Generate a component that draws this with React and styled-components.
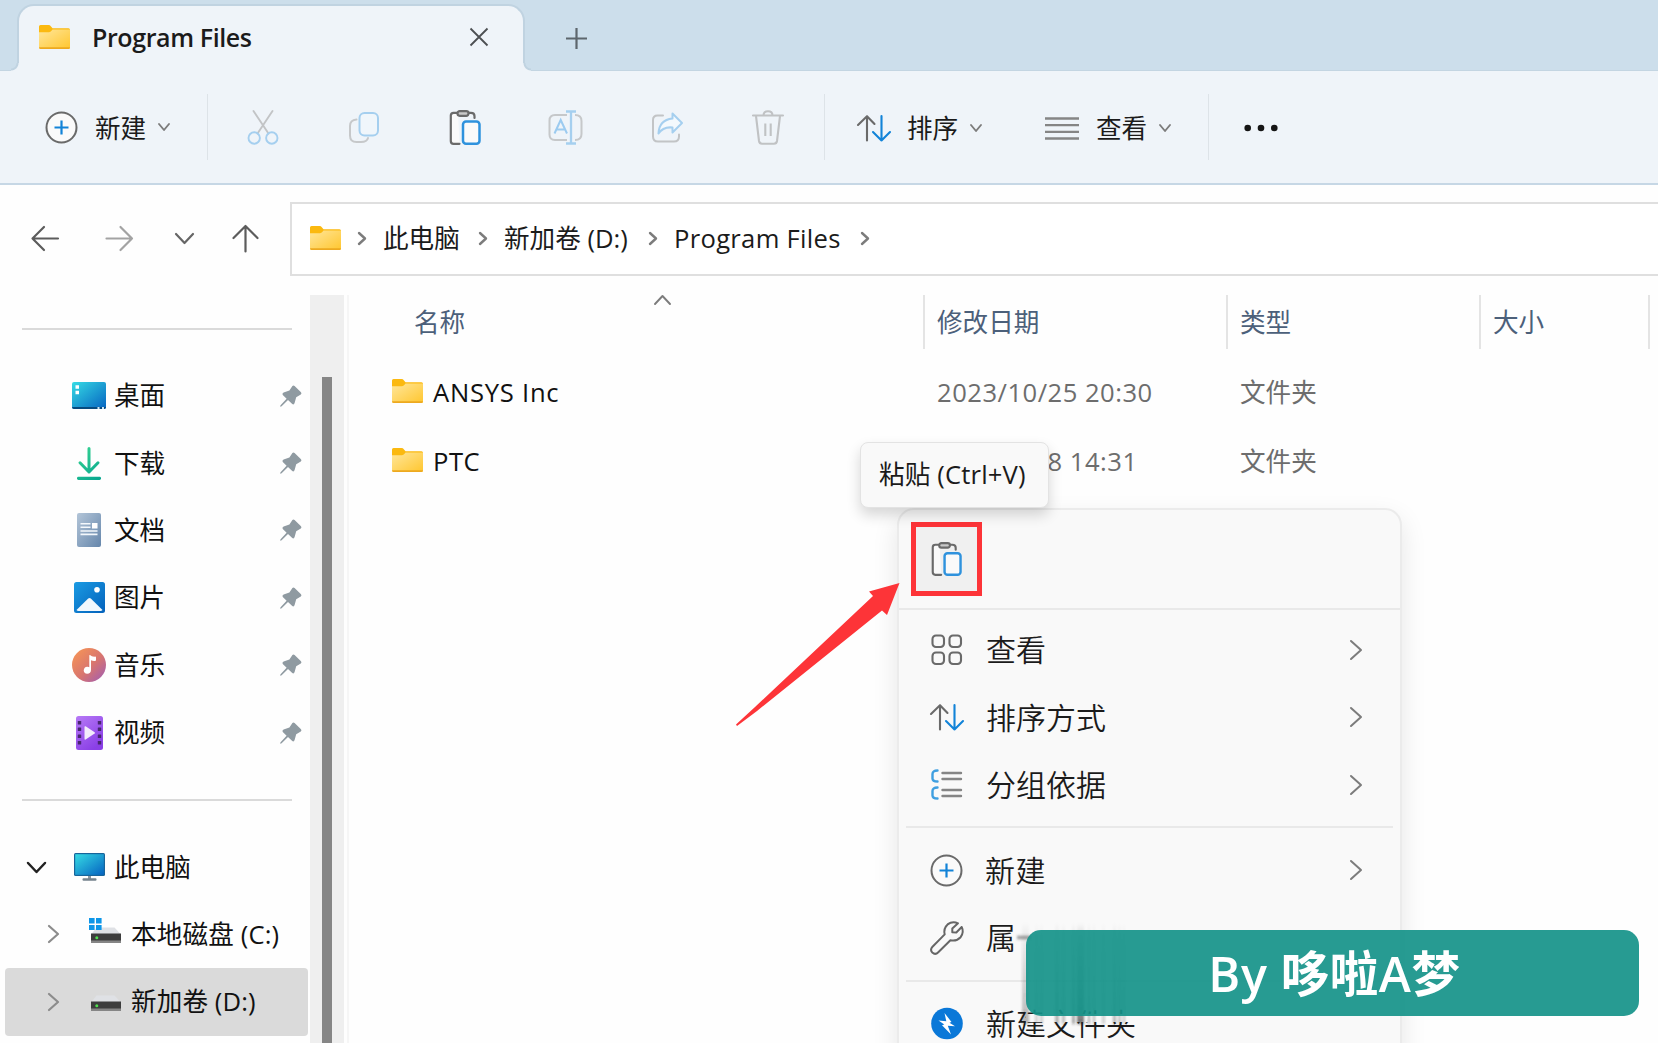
import React from 'react';
import styled, { createGlobalStyle } from 'styled-components';

const GlobalStyle = createGlobalStyle`
  * {
    box-sizing: border-box;
  }
  body {
    margin: 0;
    overflow: hidden;
    background: #fff;
    font-family: "Open Sans", "Noto Sans CJK SC", sans-serif;
    font-size: 25.6px;
    color: #1b1b1b;
  }
  svg {
    display: block;
    flex: none;
    overflow: visible;
  }
`;

const Window = styled.div`
  position: relative;
  width: 1658px;
  height: 1043px;
  overflow: hidden;
  display: flex;
  flex-direction: column;
  background: #fefefe;
`;

const Label = styled.span`
  white-space: nowrap;
  line-height: 34px;
  font-size: ${({ $size }) => $size || 25.6}px;
  letter-spacing: ${({ $track }) => $track || 0}px;
`;

/* ---------- tab strip ---------- */

const TabStrip = styled.div`
  display: flex;
  height: 71px;
  flex: none;
  padding: 4px 0 0 17px;
  background: #ccdeeb;
  border-bottom: 1px solid #c3d5e2;
`;

const Tab = styled.div`
  position: relative;
  display: flex;
  align-items: center;
  width: 508px;
  height: 67px;
  padding: 0 35px 3px 20px;
  border: 2px solid #c0d3e1;
  border-bottom: none;
  border-radius: 17px 17px 0 0;
  background: #eff4f9;

  /* flared feet of the tab */
  &::before,
  &::after {
    content: '';
    position: absolute;
    bottom: 0;
    width: 8px;
    height: 8px;
  }
  &::before {
    left: -8px;
    background: radial-gradient(circle at 0 0, #ccdeeb 5px, #c0d3e1 6px, #c0d3e1 7px, #eff4f9 8px);
  }
  &::after {
    right: -8px;
    background: radial-gradient(circle at 100% 0, #ccdeeb 5px, #c0d3e1 6px, #c0d3e1 7px, #eff4f9 8px);
  }
`;

const TabTitle = styled.span`
  flex: 1;
  margin-left: 22px;
  font-size: 25px;
  font-weight: 600;
  letter-spacing: -0.4px;
  line-height: 34px;
`;

const NewTab = styled.div`
  margin: 24px 0 0 41px;
`;

/* ---------- toolbar ---------- */

const Toolbar = styled.div`
  display: flex;
  align-items: center;
  flex: none;
  height: 114px;
  padding-left: 45px;
  background: #eff4f9;
  border-bottom: 2px solid #c6d7e5;
`;

const ToolButton = styled.div`
  display: flex;
  align-items: center;
  margin-left: ${({ $left }) => $left || 0}px;
  padding-top: ${({ $drop }) => $drop || 0}px;

  ${Label} {
    width: 51px;
    margin: 0 13px 0 ${({ $inset }) => $inset}px;
    padding-top: ${({ $drop }) => ($drop ? 2 : 4)}px;
  }
`;

const ToolSeparator = styled.div`
  width: 1px;
  height: 66px;
  margin-left: ${({ $left }) => $left}px;
  background: #dde3e8;
`;

const IconGroup = styled.div`
  display: flex;
  margin-left: 4px;
`;

const IconCell = styled.div`
  display: flex;
  align-items: center;
  justify-content: center;
  width: 101px;
  padding-top: 1px;
`;

/* ---------- address row ---------- */

const AddressRow = styled.div`
  display: flex;
  flex: none;
  height: 110px;
  padding: 17px 0 0 31px;
`;

const NavButtons = styled.div`
  display: flex;
  align-items: center;
  height: 73px;
  width: 259px;
`;

const NavIcon = styled.div`
  margin-right: ${({ $right }) => $right || 0}px;
`;

const AddressBar = styled.div`
  display: flex;
  align-items: center;
  flex: 1;
  height: 74px;
  padding: 0 0 2px 18px;
  border: 2px solid #dfdfdf;
  border-right: none;
  background: #fff;
`;

const Crumb = styled.div`
  display: flex;
  align-items: center;

  ${Label} {
    width: ${({ $width }) => $width}px;
    margin: 0 19px 0 18px;
    padding-top: 1px;
  }
`;

const CrumbStart = styled.div`
  margin-left: 18px;
`;

/* ---------- body ---------- */

const Body = styled.div`
  display: flex;
  flex: 1;
  min-height: 0;
`;

const Sidebar = styled.div`
  display: flex;
  flex-direction: column;
  flex: none;
  width: 310px;
`;

const Rule = styled.div`
  flex: none;
  height: 2px;
  margin: ${({ $top, $bottom }) => `${$top}px 18px ${$bottom}px 22px`};
  background: #dadada;
`;

const SideItem = styled.div`
  display: flex;
  align-items: center;
  flex: none;
  height: 67.4px;
  margin: 0 2px 0 5px;
  padding-left: ${({ $depth }) => ($depth ? 44 : 23)}px;
  border-radius: 4px;
  background: ${({ $active }) => ($active ? '#dadada' : 'transparent')};
  color: #111;

  ${Label} {
    flex: 1;
    padding-top: 1px;
  }
`;

const Expander = styled.div`
  flex: none;
  width: ${({ $depth }) => ($depth ? 39 : 43)}px;
`;

const SideIcon = styled.div`
  display: flex;
  flex: none;
  justify-content: center;
  width: 36px;
  margin-right: ${({ $depth }) => ($depth ? 7 : 7)}px;
`;

const Pin = styled.div`
  margin-right: 6px;
`;

const Scrollbar = styled.div`
  flex: none;
  width: 34px;
  padding: 82px 12px 0;
  background: #efefef;
`;

const Thumb = styled.div`
  height: 100%;
  background: #868686;
`;

const FilePane = styled.div`
  flex: 1;
  margin-left: 3px;
  border-left: 2px solid #f6f6f6;
`;

const HeaderRow = styled.div`
  display: grid;
  grid-template-columns: 576px 303px 253px 169px 1fr;
  height: 54px;
  margin-bottom: 10px;
  color: #4c607a;
`;

const HeaderCell = styled.div`
  display: flex;
  align-items: center;
  padding-left: ${({ $first }) => ($first ? 65 : 12)}px;
  border-right: 2px solid #e4e4e4;

  &:last-child {
    border: none;
  }

  ${Label} {
    padding-top: 2px;
  }
`;

const SortMark = styled.div`
  align-self: flex-start;
  margin: 1px 0 0 190px;
`;

const FileRow = styled.div`
  display: grid;
  grid-template-columns: 588px 303px 1fr;
  align-items: center;
  height: 69px;
  padding-bottom: 2px;
  color: #6d6d6d;
`;

const FileName = styled.div`
  display: flex;
  align-items: center;
  gap: 10px;
  padding-left: 43px;
  color: #111;

  svg {
    margin-bottom: 4px;
  }
`;

/* ---------- floating layers ---------- */

const ContextMenu = styled.div`
  position: absolute;
  left: 897px;
  top: 508px;
  width: 505px;
  height: 560px;
  border: 2px solid #ebebeb;
  border-radius: 17px;
  background: #f9f9f9;
  box-shadow: 0 10px 26px rgba(0, 0, 0, 0.1);
`;

const MenuActions = styled.div`
  height: 98px;
  padding: 12px 12px;
`;

const PasteButton = styled.div`
  display: flex;
  align-items: center;
  justify-content: center;
  width: 71px;
  height: 74px;
  border: 5px solid #fd3438;
  background: #f0f0f0;
`;

const MenuRule = styled.div`
  height: 2px;
  margin: 0 ${({ $inset }) => $inset || 0}px;
  background: #e9e9e9;
`;

const MenuGroup = styled.div`
  padding: ${({ $top }) => $top}px 39px ${({ $bottom }) => $bottom}px 31px;
`;

const MenuItem = styled.div`
  display: flex;
  align-items: center;
  height: 67.5px;

  ${Label} {
    flex: 1;
    margin-left: 22px;
    padding-top: 1px;
    font-weight: 350;
  }
`;

const Tooltip = styled.div`
  position: absolute;
  left: 860px;
  top: 442px;
  width: 189px;
  height: 66px;
  padding: 14px 0 0 18px;
  border: 1px solid #e3e3e3;
  border-radius: 8px;
  background: #f9f9f9;
  box-shadow: 0 7px 14px rgba(0, 0, 0, 0.16);
`;

const Arrow = styled.svg`
  position: absolute;
  left: 735px;
  top: 583px;
`;

const Smear = styled.svg`
  position: absolute;
  left: 1012px;
  top: 920px;
`;

const Banner = styled.div`
  position: absolute;
  left: 1026px;
  top: 930px;
  width: 613px;
  height: 86px;
  display: flex;
  align-items: center;
  justify-content: center;
  padding-left: 4px;
  border-radius: 15px;
  background: rgba(21, 146, 137, 0.92);
  color: #fff;
  font-size: 48.5px;
  font-weight: 600;
  letter-spacing: 0.6px;
  line-height: 60px;
  white-space: pre;
`;

/* ---------- icons ---------- */

const GREY = '#6a6a6a';
const BLUE = '#1283d8';

const FolderIcon = ({ width = 31, height = 24 }) => (
  <svg width={width} height={height} viewBox="0 0 31 24" preserveAspectRatio="none">
    <defs>
      <linearGradient id="folder" x1="0" y1="0" x2="1" y2="1">
        <stop offset="0" stopColor="#ffe69a" />
        <stop offset="1" stopColor="#ffc62e" />
      </linearGradient>
    </defs>
    <path d="M0 1.5Q0 0 1.5 0H9.5Q11 0 12 1.4L13.5 3.2H29.5Q31 3.2 31 4.7V10H0Z" fill="#fbb910" />
    <path d="M0 7.2H10Q11.5 7.2 12.5 5.8L13.5 4.6H31V22.5Q31 24 29.5 24H1.5Q0 24 0 22.5Z" fill="url(#folder)" />
    <path d="M0 22.2H31Q31 24 29.5 24H1.5Q0 24 0 22.2Z" fill="#eda91f" />
  </svg>
);

const Chevron = ({ w = 10, h = 6, dir = 'down', color = '#7c7c7c', stroke = 1.9 }) => {
  const points = {
    down: `0,0 ${w / 2},${h} ${w},0`,
    up: `0,${h} ${w / 2},0 ${w},${h}`,
    right: `0,0 ${w},${h / 2} 0,${h}`,
  };
  return (
    <svg width={w} height={h}>
      <polyline points={points[dir]} fill="none" stroke={color} strokeWidth={stroke} strokeLinecap="round" strokeLinejoin="round" />
    </svg>
  );
};

const PlusCircle = () => (
  <svg width="33" height="33" viewBox="0 0 33 33" fill="none">
    <circle cx="16.5" cy="16.5" r="15" fill="#fafafa" stroke={GREY} strokeWidth="2" />
    <path d="M16.5 9.5V23.5M9.5 16.5H23.5" stroke={BLUE} strokeWidth="2.2" />
  </svg>
);

const CutIcon = () => (
  <svg width="32" height="35" viewBox="0 0 32 35" fill="none" strokeWidth="1.9">
    <path d="M6.5 1L21.5 23.5M25.5 1L10.5 23.5" stroke="#c2c4c6" strokeLinecap="round" />
    <circle cx="7.2" cy="28" r="5.7" stroke="#a5cfef" />
    <circle cx="24.8" cy="28" r="5.7" stroke="#a5cfef" />
  </svg>
);

const CopyIcon = () => (
  <svg width="32" height="33" viewBox="0 0 32 33" fill="none" strokeWidth="2">
    <path d="M8.5 8.5Q2 9 2 15V24.5Q2 31 8.5 31H13Q19 31 20 27" stroke="#c6c8ca" strokeLinecap="round" />
    <rect x="11.5" y="2" width="18.5" height="22.5" rx="5" stroke="#a5cfef" fill="#f0f6fb" />
  </svg>
);

const PasteIcon = ({ w = 32, h = 35 }) => (
  <svg width={w} height={h} viewBox="0 0 32 35" preserveAspectRatio="none" fill="none" strokeWidth="2.2">
    <path d="M9 2.8H4.5Q1.8 2.8 1.8 5.5V31Q1.8 33.8 4.5 33.8H10.5" fill="#fafafa" stroke={GREY} strokeLinecap="round" />
    <path d="M18.5 2.8H22Q25.5 2.8 25.5 6V8" stroke={GREY} strokeLinecap="round" />
    <rect x="8.5" y="1.2" width="11" height="4.6" rx="2.2" stroke={GREY} fill="#c9c9c9" />
    <rect x="14" y="11.5" width="16.5" height="22.3" rx="3" fill="#fafafa" stroke="#2f92dd" strokeWidth="2.5" />
  </svg>
);

const RenameIcon = () => (
  <svg width="35" height="35" viewBox="0 0 35 35" fill="none" strokeWidth="2">
    <path d="M19 5H7Q1.5 5 1.5 10.5V24.5Q1.5 30 7 30H19M27 5Q33.5 5 33.5 11V24Q33.5 30 27 30" stroke="#c6c8ca" />
    <path d="M6.5 23.5L12.7 10L19 23.5M8.5 19.5H17" stroke="#9ccbf0" />
    <path d="M23 1.5V33.5M18 1.5H28M18 33.5H28" stroke="#a5cfef" strokeWidth="2.3" />
  </svg>
);

const ShareIcon = () => (
  <svg width="32" height="32" viewBox="0 0 32 32" fill="none" strokeWidth="2" strokeLinejoin="round">
    <path d="M12 3.5H6.5Q2 3.5 2 8V24.5Q2 29.5 7 29.5H23Q28 29.5 28 24.5V22.5" stroke="#c2c4c6" strokeLinecap="round" />
    <path d="M21.5 1.5L31 11L21.5 20.5V15.5Q12 14.5 7.5 21.5Q8 8 21.5 6.5Z" stroke="#a5cfef" fill="#f3f9fd" />
  </svg>
);

const TrashIcon = () => (
  <svg width="32" height="35" viewBox="0 0 32 35" fill="none" stroke="#c0c2c4" strokeWidth="2.1">
    <path d="M1 5.5H31M11.5 5.5Q11.5 1.3 16 1.3Q20.5 1.3 20.5 5.5" strokeLinecap="round" />
    <path d="M4 6L7 31Q7.4 33.7 10 33.7H22Q24.6 33.7 25 31L28 6" />
    <path d="M13.3 13.5V26M18.7 13.5V26" />
  </svg>
);

const SortIcon = () => (
  <svg width="34" height="27" viewBox="0 0 34 27" fill="none" strokeWidth="2.1" strokeLinecap="round" strokeLinejoin="round">
    <path d="M10 25.5V1.2M1 10L10 1.2L17.5 9" stroke={GREY} />
    <path d="M24.5 1V25.5M16 17L24.5 25.5L33 17" stroke={BLUE} />
  </svg>
);

const LinesIcon = () => (
  <svg width="34" height="23" viewBox="0 0 34 23" stroke="#858585" strokeWidth="2.3">
    <path d="M0 1.5H34M0 8.2H34M0 14.8H34M0 21.5H34" />
  </svg>
);

const DotsIcon = () => (
  <svg width="34" height="8" viewBox="0 0 34 8" fill="#151515">
    <circle cx="3.7" cy="4" r="3.3" />
    <circle cx="17" cy="4" r="3.3" />
    <circle cx="30.3" cy="4" r="3.3" />
  </svg>
);

const ArrowIcon = ({ d, color }) => (
  <svg width="27" height="27" viewBox="0 0 27 27" fill="none" stroke={color} strokeWidth="2.2" strokeLinecap="round" strokeLinejoin="round">
    <path d={d} />
  </svg>
);

const PinIcon = () => (
  <svg width="22" height="22" viewBox="0 0 22 22">
    <path d="M12.4 1Q13.4 0 14.6 1L21 7.2Q22 8.4 20.8 9.5L16.2 12.2L14.6 18Q13.8 20.4 12 18.8L8 15L1.6 21.2Q0.6 22 0.3 21.4Q0 20.7 0.8 20L6.6 13.8L2.8 10Q1.6 8.4 3.6 7.4L9.4 5.4Z" fill="#8f9aa1" />
  </svg>
);

const DesktopIcon = () => (
  <svg width="34" height="27" viewBox="0 0 34 27">
    <defs>
      <linearGradient id="desk" x1="0" y1="0" x2="1" y2="1">
        <stop offset="0" stopColor="#36dbe4" />
        <stop offset="1" stopColor="#0563c1" />
      </linearGradient>
    </defs>
    <rect width="34" height="27" rx="2" fill="url(#desk)" />
    <path d="M0 25H34Q34 27 32 27H2Q0 27 0 25Z" fill="#064a7f" />
    <path d="M3.5 3.2H7V6.7H3.5ZM3.5 8.7H7V12.2H3.5Z" fill="#fff" />
    <path d="M25.5 25H27.5V27H25.5ZM30 25H32V27H30Z" fill="#cfe6f5" />
  </svg>
);

const DownloadIcon = () => (
  <svg width="24" height="33" viewBox="0 0 24 33" fill="none">
    <defs>
      <linearGradient id="down" gradientUnits="userSpaceOnUse" x1="0" y1="0" x2="24" y2="33">
        <stop offset="0" stopColor="#38d692" />
        <stop offset="1" stopColor="#06a58f" />
      </linearGradient>
    </defs>
    <path d="M12 1.5V25M3 15.8L12 25L21 15.8" stroke="url(#down)" strokeWidth="3" strokeLinecap="round" strokeLinejoin="round" />
    <rect y="29.8" width="24" height="3.2" rx="1.4" fill="url(#down)" />
  </svg>
);

const DocumentIcon = () => (
  <svg width="24" height="34" viewBox="0 0 24 34">
    <defs>
      <linearGradient id="doc" x1="0" y1="0" x2="1" y2="1">
        <stop offset="0" stopColor="#b3c5d8" />
        <stop offset="1" stopColor="#6586ab" />
      </linearGradient>
    </defs>
    <rect width="24" height="34" rx="2" fill="url(#doc)" />
    <path d="M3.5 10.8H13.5M3.5 14.3H13.5M3.5 18H20.5M3.5 21.4H20.5" stroke="#f4f8fc" strokeWidth="1.6" />
    <rect x="15" y="10" width="5.5" height="5.5" fill="#fff" />
  </svg>
);

const PictureIcon = () => (
  <svg width="31" height="31" viewBox="0 0 31 31">
    <defs>
      <linearGradient id="pic" x1="0" y1="0" x2="1" y2="1">
        <stop offset="0" stopColor="#1a9be3" />
        <stop offset="1" stopColor="#0461bb" />
      </linearGradient>
    </defs>
    <rect width="31" height="31" rx="2.5" fill="url(#pic)" />
    <path d="M2.5 28L14.2 16.5Q15.5 15.5 16.8 16.5L28.5 28Q27.8 29 26.5 29H4.5Q3.2 29 2.5 28Z" fill="#f2f8fd" />
    <circle cx="23" cy="7.8" r="2.8" fill="#fff" />
  </svg>
);

const MusicIcon = () => (
  <svg width="34" height="34" viewBox="0 0 34 34">
    <defs>
      <linearGradient id="music" x1="0" y1="0" x2="1" y2="1">
        <stop offset="0.1" stopColor="#f49258" />
        <stop offset="0.55" stopColor="#d8756f" />
        <stop offset="1" stopColor="#9c5bb9" />
      </linearGradient>
    </defs>
    <circle cx="17" cy="17" r="17" fill="url(#music)" />
    <path d="M17.3 7.5Q17.3 6.8 18 7Q20 9 23.2 8.6Q24 8.6 24 9.4V12Q24 13 23 13Q20.8 13.2 19 12.3V22Q18.8 25.8 15.2 25.8Q11.8 25.5 11.7 22.3Q12 19 15.2 18.7Q16.5 18.6 17.3 19.2Z" fill="#fff" />
  </svg>
);

const VideoIcon = () => (
  <svg width="27" height="34" viewBox="0 0 27 34">
    <defs>
      <linearGradient id="video" x1="0" y1="0" x2="0.6" y2="1">
        <stop offset="0" stopColor="#b77af6" />
        <stop offset="1" stopColor="#8a3fe6" />
      </linearGradient>
    </defs>
    <rect width="27" height="34" rx="2.5" fill="url(#video)" />
    {[5, 11.5, 18.5, 25].map((y) => (
      <g key={y} fill="#47276f">
        <rect x="1.8" y={y} width="3.4" height="3.6" rx="0.6" />
        <rect x="21.8" y={y} width="3.4" height="3.6" rx="0.6" />
      </g>
    ))}
    <path d="M8.5 11Q8.5 9.8 9.6 10.3L18.6 16.2Q19.4 16.9 18.6 17.6L9.6 23.5Q8.5 24 8.5 22.8Z" fill="#f3ecfb" />
  </svg>
);

const ComputerIcon = () => (
  <svg width="31" height="28" viewBox="0 0 31 28">
    <rect x="14" y="22" width="3" height="4" fill="#8a97a0" />
    <rect x="8.5" y="25.2" width="14" height="2.6" rx="1" fill="#75838d" />
    <rect width="31" height="23" rx="1.5" fill="#17659b" />
    <rect x="1.2" y="1.2" width="28.6" height="20.6" fill="url(#desk)" />
  </svg>
);

const DriveIcon = ({ system }) => (
  <svg width="32" height="26" viewBox="0 0 32 26">
    <path d="M6.5 6.5H24.5L30.5 13H1.5Z" fill="#dfe1e5" />
    <rect x="1" y="12.5" width="30" height="9" fill="#3d3d3d" />
    <rect x="1" y="19.5" width="30" height="2.5" fill="#858585" />
    <circle cx="6.8" cy="16.8" r="1.5" fill="#4fe04f" />
    {system && <path d="M-1 -3H4.6V2.6H-1ZM6 -3H11.6V2.6H6ZM-1 4H4.6V9H-1ZM6 4H11.6V9H6Z" fill="#0d96e8" />}
  </svg>
);

const GridIcon = () => (
  <svg width="34" height="32" viewBox="0 0 34 32" fill="none" stroke={GREY} strokeWidth="2.1">
    <rect x="2.5" y="1.5" width="11.5" height="11.5" rx="3.5" />
    <rect x="19.5" y="1.5" width="11.5" height="11.5" rx="3.5" />
    <rect x="2.5" y="18.5" width="11.5" height="11.5" rx="3.5" />
    <rect x="19.5" y="18.5" width="11.5" height="11.5" rx="3.5" />
  </svg>
);

const GroupIcon = () => (
  <svg width="34" height="31" viewBox="0 0 34 31" fill="none" strokeWidth="2.4" strokeLinecap="round">
    <path d="M7.5 1.5Q2.5 1.5 2.5 5V9.5Q2.5 12.5 7.5 12.5M7.5 18.5Q2.5 18.5 2.5 22V26.5Q2.5 29.5 7.5 29.5" stroke="#3f9fe0" />
    <path d="M12.5 4H31M12.5 10H31M12.5 21H31M12.5 27H31" stroke="#858585" />
  </svg>
);

const WrenchIcon = () => (
  <svg width="34" height="34" viewBox="0 0 34 34" fill="none" stroke="#666" strokeWidth="2" strokeLinejoin="round">
    <path d="M28 2.3Q22.5 -0.3 17.6 3.4Q13.3 7.3 14.7 13.4L2.5 25.7Q-0.3 29 2.3 31.6Q5.3 34.2 8.3 31.3L20.4 19.2Q26.5 20.6 30.6 16.2Q34.3 11.2 31.7 6L26.3 11.5L22.3 11.3L22.3 7.6Z" />
  </svg>
);

const BoltIcon = () => (
  <svg width="34" height="33" viewBox="0 0 34 33">
    <circle cx="17" cy="16.5" r="15.8" fill="#0a78d8" />
    <path d="M14.5 6L21.5 15L19.5 15.8L25 19.3L17.8 18.7L21 27.5L12 18.3L14.3 17.5L8.5 13.5L16.3 14.3Z" fill="#fff" />
  </svg>
);

/* ---------- data ---------- */

const quickAccess = [
  { name: '桌面', icon: <DesktopIcon /> },
  { name: '下载', icon: <DownloadIcon /> },
  { name: '文档', icon: <DocumentIcon /> },
  { name: '图片', icon: <PictureIcon /> },
  { name: '音乐', icon: <MusicIcon /> },
  { name: '视频', icon: <VideoIcon /> },
];

const toolIcons = [CutIcon, CopyIcon, PasteIcon, RenameIcon, ShareIcon, TrashIcon];

const crumbs = [
  { name: '此电脑', width: 77 },
  { name: '新加卷 (D:)', width: 126 },
  { name: 'Program Files', width: 168, track: 0.3 },
];

const files = [
  { name: 'ANSYS Inc', date: '2023/10/25 20:30', track: 0.75 },
  { name: 'PTC', date: '2023/10/8 14:31', track: 0.5 },
];

// x, width, opacity of each streak around the banner
const streaks = [
  [10, 7, 0.32], [23, 3, 0.2], [28, 3, 0.2], [43, 4, 0.32], [50, 3, 0.28],
  [60, 3, 0.4], [65, 7, 0.6], [76, 2, 0.35], [81, 2, 0.3], [90, 3, 0.2], [101, 3, 0.32], [106, 3, 0.25], [111, 2, 0.25],
];

export default function App() {
  return (
    <Window>
      <GlobalStyle />
      <TabStrip>
        <Tab>
          <FolderIcon />
          <TabTitle>Program Files</TabTitle>
          <svg width="18" height="18" viewBox="0 0 18 18" stroke="#4c4f52" strokeWidth="1.8">
            <path d="M0.5 0.5L17.5 17.5M17.5 0.5L0.5 17.5" />
          </svg>
        </Tab>
        <NewTab>
          <svg width="21" height="21" viewBox="0 0 21 21" stroke="#5d666d" strokeWidth="2.2">
            <path d="M10.5 0V21M0 10.5H21" />
          </svg>
        </NewTab>
      </TabStrip>

      <Toolbar>
        <ToolButton $inset={17}>
          <PlusCircle />
          <Label>新建</Label>
          <Chevron />
        </ToolButton>
        <ToolSeparator $left={38} />
        <IconGroup>
          {toolIcons.map((Icon, i) => (
            <IconCell key={i}><Icon /></IconCell>
          ))}
        </IconGroup>
        <ToolSeparator $left={6} />
        <ToolButton $left={32} $inset={16} $drop={2}>
          <SortIcon />
          <Label>排序</Label>
          <Chevron />
        </ToolButton>
        <ToolButton $left={64} $inset={17} $drop={2}>
          <LinesIcon />
          <Label>查看</Label>
          <Chevron />
        </ToolButton>
        <ToolSeparator $left={38} />
        <ToolButton $left={35} $drop={2}>
          <DotsIcon />
        </ToolButton>
      </Toolbar>

      <AddressRow>
        <NavButtons>
          <NavIcon $right={48}><ArrowIcon color="#5c5c5c" d="M27 13.5H1.5M13 2L1.5 13.5L13 25" /></NavIcon>
          <NavIcon $right={43}><ArrowIcon color="#a3a3a3" d="M0.5 13.5H26M14.5 2L26 13.5L14.5 25" /></NavIcon>
          <NavIcon $right={39}><Chevron w={17} h={9} color="#666" stroke={2.2} /></NavIcon>
          <NavIcon><ArrowIcon color="#5c5c5c" d="M13.5 26.5V1M1.5 13L13.5 1L25.5 13" /></NavIcon>
        </NavButtons>
        <AddressBar>
          <FolderIcon />
          <CrumbStart>
            <Chevron w={6} h={11} dir="right" stroke={2.4} />
          </CrumbStart>
          {crumbs.map((crumb) => (
            <Crumb key={crumb.name} $width={crumb.width + 1}>
              <Label $track={crumb.track}>{crumb.name}</Label>
              <Chevron w={6} h={11} dir="right" stroke={2.4} />
            </Crumb>
          ))}
        </AddressBar>
      </AddressRow>

      <Body>
        <Sidebar>
          <Rule $top={33} $bottom={32} />
          {quickAccess.map((item) => (
            <SideItem key={item.name}>
              <Expander />
              <SideIcon>{item.icon}</SideIcon>
              <Label>{item.name}</Label>
              <Pin><PinIcon /></Pin>
            </SideItem>
          ))}
          <Rule $top={33} $bottom={32} />
          <SideItem>
            <Expander><Chevron w={17} h={9} color="#222" stroke={2.5} /></Expander>
            <SideIcon><ComputerIcon /></SideIcon>
            <Label>此电脑</Label>
          </SideItem>
          <SideItem $depth={1}>
            <Expander $depth={1}><Chevron w={9} h={16} dir="right" color="#8c8c8c" stroke={2.2} /></Expander>
            <SideIcon $depth={1}><DriveIcon system /></SideIcon>
            <Label $track={0.15}>本地磁盘 (C:)</Label>
          </SideItem>
          <SideItem $depth={1} $active>
            <Expander $depth={1}><Chevron w={9} h={16} dir="right" color="#8c8c8c" stroke={2.2} /></Expander>
            <SideIcon $depth={1}><DriveIcon /></SideIcon>
            <Label $track={0.1}>新加卷 (D:)</Label>
          </SideItem>
        </Sidebar>
        <Scrollbar><Thumb /></Scrollbar>
        <FilePane>
          <HeaderRow>
            <HeaderCell $first>
              <Label>名称</Label>
              <SortMark><Chevron w={15} h={8} dir="up" /></SortMark>
            </HeaderCell>
            <HeaderCell><Label>修改日期</Label></HeaderCell>
            <HeaderCell><Label>类型</Label></HeaderCell>
            <HeaderCell><Label>大小</Label></HeaderCell>
            <HeaderCell />
          </HeaderRow>
          {files.map((file) => (
            <FileRow key={file.name}>
              <FileName>
                <FolderIcon />
                <Label $track={file.track}>{file.name}</Label>
              </FileName>
              <Label $track={0.5}>{file.date}</Label>
              <Label>文件夹</Label>
            </FileRow>
          ))}
        </FilePane>
      </Body>

      <ContextMenu>
        <MenuActions>
          <PasteButton><PasteIcon w={31} h={34} /></PasteButton>
        </MenuActions>
        <MenuRule />
        <MenuGroup $top={6} $bottom={7}>
          {[
            ['查看', <GridIcon />],
            ['排序方式', <SortIcon />],
            ['分组依据', <GroupIcon />],
          ].map(([name, icon]) => (
            <MenuItem key={name}>
              {icon}
              <Label $size={30}>{name}</Label>
              <Chevron w={10} h={18} dir="right" stroke={2} />
            </MenuItem>
          ))}
        </MenuGroup>
        <MenuRule $inset={7} />
        <MenuGroup $top={9} $bottom={8}>
          <MenuItem>
            <PlusCircle />
            <Label $size={30} $track={0.4}>新建</Label>
            <Chevron w={10} h={18} dir="right" stroke={2} />
          </MenuItem>
          <MenuItem>
            <WrenchIcon />
            <Label $size={30}>属</Label>
          </MenuItem>
        </MenuGroup>
        <MenuRule $inset={7} />
        <MenuGroup $top={8} $bottom={0}>
          <MenuItem>
            <BoltIcon />
            <Label $size={30}>新建文件夹</Label>
          </MenuItem>
        </MenuGroup>
      </ContextMenu>

      <Tooltip><Label $track={0.15}>粘贴 (Ctrl+V)</Label></Tooltip>

      <Arrow width="165" height="145" viewBox="0 0 165 145">
        <path d="M164.5 0L134 8.5L138 13L20 124L1 141.5L2 143L22 128L147 27.5L152 32Z" fill="#fd3438" />
      </Arrow>

      <Smear width="140" height="106" viewBox="0 0 140 106">
        <defs>
          <filter id="soft" x="-20%" y="-20%" width="140%" height="140%">
            <feGaussianBlur stdDeviation="1.2 1.5" />
          </filter>
          <linearGradient id="fade" x1="0" y1="0" x2="0" y2="1">
            <stop offset="0" stopColor="#333" stopOpacity="0" />
            <stop offset="0.15" stopColor="#333" stopOpacity="0.2" />
            <stop offset="0.6" stopColor="#333" stopOpacity="0.6" />
            <stop offset="1" stopColor="#222" stopOpacity="1" />
          </linearGradient>
        </defs>
        <rect x="14" y="94" width="112" height="8" fill="#f9f9f9" />
        <g filter="url(#soft)">
          {streaks.map(([x, width, opacity]) => (
            <rect key={x} x={x} y="3" width={width} height="101" fill="url(#fade)" opacity={opacity} />
          ))}
          <rect x="5" y="16" width="14" height="3" fill="#444" opacity="0.6" />
        </g>
      </Smear>

      <Banner>By 哆啦A梦</Banner>
    </Window>
  );
}
